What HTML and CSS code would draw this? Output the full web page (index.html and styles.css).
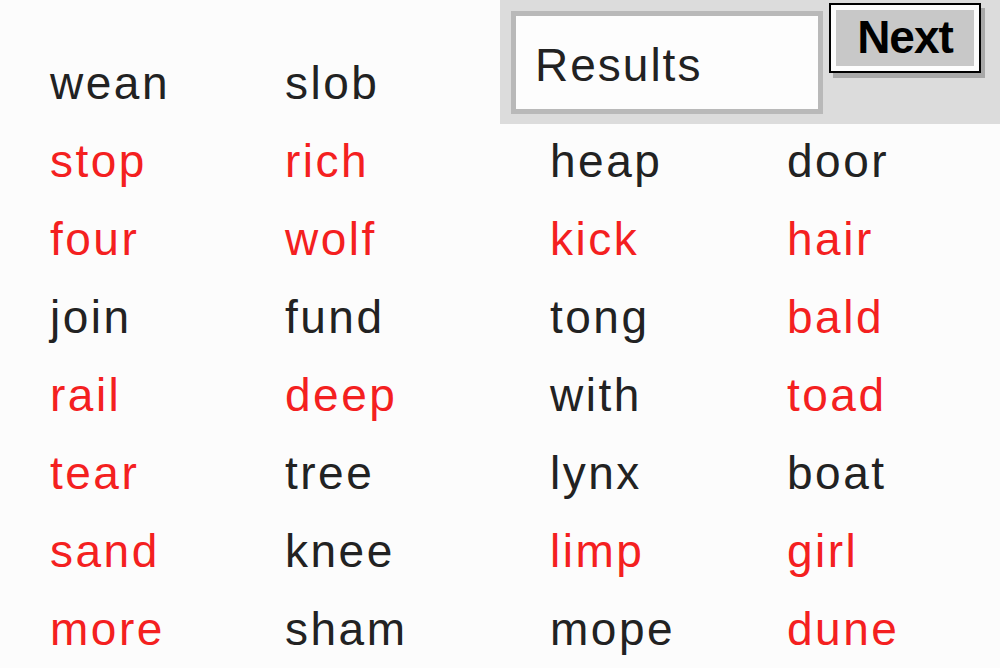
FILE: index.html
```html
<!DOCTYPE html>
<html lang="en">
<head>
    <meta charset="UTF-8">
    <meta name="viewport" content="width=device-width, initial-scale=1.0">
    <title>Word Drill</title>
    <link rel="stylesheet" href="styles.css">
</head>
<body>

    <div class="toolbar">
        <div class="results">Results</div>
        <button class="next-btn">Next</button>
    </div>

    <div class="words">
        <span class="word">wean</span>
        <span class="word">slob</span>
        <span class="word"></span>
        <span class="word"></span>

        <span class="word miss">stop</span>
        <span class="word miss">rich</span>
        <span class="word">heap</span>
        <span class="word">door</span>

        <span class="word miss">four</span>
        <span class="word miss">wolf</span>
        <span class="word miss">kick</span>
        <span class="word miss">hair</span>

        <span class="word">join</span>
        <span class="word">fund</span>
        <span class="word">tong</span>
        <span class="word miss">bald</span>

        <span class="word miss">rail</span>
        <span class="word miss">deep</span>
        <span class="word">with</span>
        <span class="word miss">toad</span>

        <span class="word miss">tear</span>
        <span class="word">tree</span>
        <span class="word">lynx</span>
        <span class="word">boat</span>

        <span class="word miss">sand</span>
        <span class="word">knee</span>
        <span class="word miss">limp</span>
        <span class="word miss">girl</span>

        <span class="word miss">more</span>
        <span class="word">sham</span>
        <span class="word">mope</span>
        <span class="word miss">dune</span>
    </div>

</body>
</html>
```

FILE: styles.css
```css
* {
    margin: 0;
    padding: 0;
    box-sizing: border-box;
}

body {
    font-family: 'Liberation Sans', Arial, sans-serif;
    background: #fcfcfc;
    color: #222;
    width: 1000px;
    height: 668px;
    overflow: hidden;
    position: relative;
}

/* panel in the top right corner, over the word grid */
.toolbar {
    position: absolute;
    top: 0;
    right: 0;
    width: 500px;
    height: 124px;
    background: #dcdcdc;
    display: flex;
    align-items: flex-start;
    padding: 3px 0 0 11px;
    gap: 6px;
}

.results {
    margin-top: 8px;
    width: 312px;
    height: 103px;
    border: 5px solid #b9b9b9;
    background: #fdfdfd;
    font-size: 46px;
    letter-spacing: 2px;
    color: #222;
    display: flex;
    align-items: center;
    padding-left: 19px;
    padding-top: 4px;
}

.next-btn {
    width: 152px;
    height: 70px;
    border: 2px solid #000;
    background: #c8c8c8;
    box-shadow: inset 0 0 0 5px #fdfdfd, 4px 5px 0 #a8a8a8;
    font-family: 'Liberation Sans', Arial, sans-serif;
    font-size: 46px;
    font-weight: bold;
    letter-spacing: -1px;
    color: #000;
    line-height: 1;
    padding-bottom: 2px;
}

.words {
    display: grid;
    grid-template-columns: 235px 265px 237px auto;
    grid-auto-rows: 78px;
    padding: 44px 0 0 50px;
}

.word {
    font-size: 46px;
    line-height: 78px;
    letter-spacing: 2.5px;
    color: #222;
}

.word.miss {
    color: #f42020;
}
```
